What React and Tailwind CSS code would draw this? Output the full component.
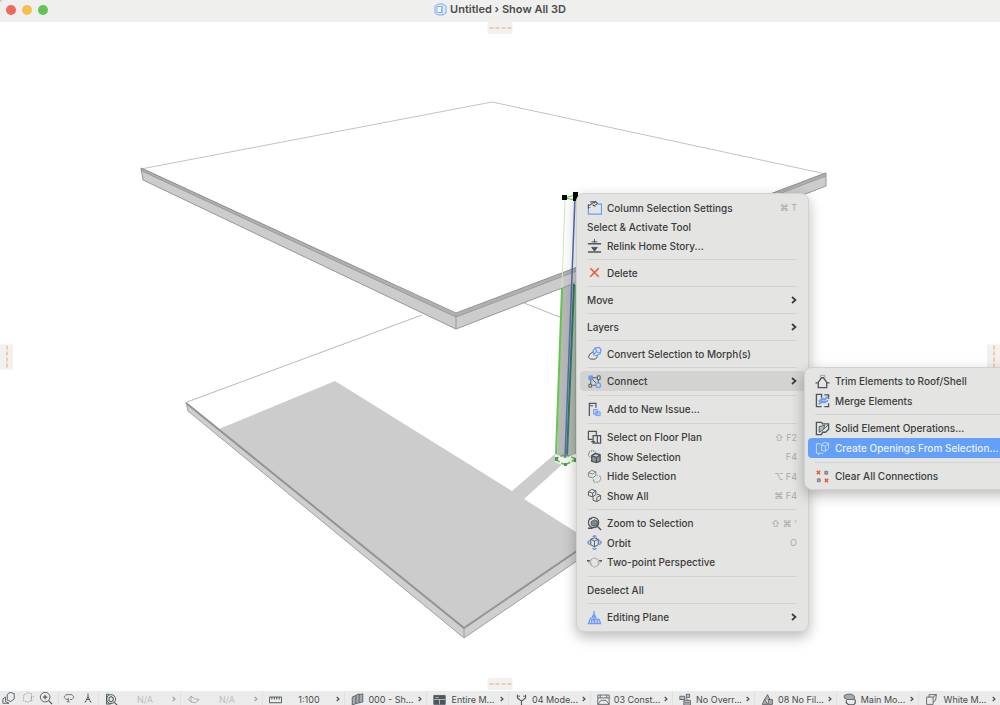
import clsx from "clsx";

const DARK = "#4d565c";
const BLUE = "#6f9bf5";
const RED = "#ee5b3c";

// every icon is drawn on a 16 x 16 grid
const icons = {
    settings: (
        <>
            <path d="M4 8H1.500V15h14V4.500H11" stroke={BLUE} strokeWidth="1.300" />
            <path d="M1.500 9V4.500M2 6l4-2.500M3.500 2h3l2 1.500M6 2.500l3-1 2 2-2 2M6 5l3 2" stroke={DARK} strokeWidth="1.200" />
        </>
    ),
    relink: (
        <>
            <path d="M1 6h14M1 15h14" stroke={DARK} strokeWidth="1.600" />
            <path d="M8 1v4M5 4h6M5 10h6L8 14z" fill={DARK} stroke={DARK} />
        </>
    ),
    remove: <path d="M3.500 3.500l9 9M12.500 3.500l-9 9" stroke={RED} strokeWidth="1.700" />,
    morph: (
        <>
            <path d="M7 6L3 8.500 1.500 12 4 14h5l2.500-3" stroke={DARK} />
            <path d="M6.500 5L9 2l4-.5L15 4l-1 4-4 2.500L7 9zM9 2l1 4 4 2M10 6l-3 3" stroke={BLUE} strokeWidth="1.300" />
        </>
    ),
    connect: (
        <>
            <path d="M2 2h4v4H2z" fill={BLUE} stroke={BLUE} />
            <path d="M6 4h5M4 6v5M12 6v4M6 12h4M6 6l4 4" stroke={DARK} />
            <path d="M11 2h3v4h-3zM2 11h3v3H2z" stroke={DARK} />
            <circle cx="12" cy="12" r="2.500" stroke={BLUE} strokeWidth="1.300" />
        </>
    ),
    issue: (
        <>
            <path d="M2.500 15V1.500h7V6M2.500 4h4" stroke={DARK} strokeWidth="1.300" />
            <path d="M7 8h4v5H7zM9.500 10.500H14v4H9.500z" fill="#b9cef9" stroke={BLUE} />
        </>
    ),
    floorPlan: (
        <>
            <path d="M6 10H1.500V1.500H10V5" stroke={DARK} strokeWidth="1.300" />
            <path d="M6.500 6H11v8H6.500zM11 6h3.500v8H11M4.500 12.500h4" stroke={DARK} strokeWidth="1.300" />
        </>
    ),
    show: (
        <>
            <path d="M1.500 6l1-3L6 1.500 9 3M1.500 7L4 9" stroke={DARK} strokeDasharray="1.500 1" />
            <path d="M5 7l4-2.500L14 6v7l-4 1.500L5 13zM5 7l5 2 4-3M10 9v5" fill="#8b9398" stroke={DARK} strokeWidth="1.400" />
        </>
    ),
    hide: (
        <>
            <path d="M1.500 4L5 1.500 9.500 3v4L6 9.500 1.500 8zM1.500 4L6 5.500 9.500 3" stroke="#7b8387" />
            <path d="M7 11v3h5l2.500-2V8L11 7" stroke="#7b8387" strokeDasharray="2 1" />
        </>
    ),
    showAll: (
        <>
            <path d="M1.500 4L5 1.500 9.500 3v4L6 9.500 1.500 8zM1.500 4L6 5.500 9.500 3M6 5.500v4" stroke={DARK} />
            <path d="M6.500 10v3l4 1.500 4-2.500V8l-4-1.500M10.500 14V10l4-2" stroke={DARK} />
        </>
    ),
    zoomSelection: (
        <>
            <circle cx="7" cy="7" r="5.500" stroke={DARK} strokeWidth="1.300" />
            <path d="M11 11l4 4M2 3h3M1 13h5" stroke={DARK} strokeWidth="1.500" />
            <path d="M4.500 6L8 4l3 1.500V10L7.500 11 4.500 9.500z" fill="#7f888d" stroke={DARK} />
        </>
    ),
    orbit: (
        <>
            <path d="M4 4.500L8 3l4 1.500v6L8 12.500 4 10.500zM4 4.500L8 6.500l4-2M8 6.500v6" stroke={DARK} />
            <path d="M3 5.500L.8 8 3 10.500M13 5.500L15.200 8 13 10.500M6 14l2 1.500L10 14M6 2l2-1.300L10 2" stroke={BLUE} strokeWidth="1.700" />
        </>
    ),
    perspective: (
        <>
            <path d="M0 6h3M13 6h3" stroke={DARK} strokeWidth="1.600" />
            <path d="M4 5l4-2 4 2v6l-4 2-4-2zM1 7l3 3M15 7l-3 3" stroke="#8b9296" strokeDasharray="2 .7" />
        </>
    ),
    plane: (
        <>
            <path d="M4 8L1.500 14.500h13L13 10H5M5 10v4M8 9v5M11 10v4" fill="#b9cef9" stroke={BLUE} strokeWidth="1.300" />
            <path d="M7.500 1v11M5 9l2.500-5L10 9" stroke={BLUE} strokeWidth="1.400" />
        </>
    ),
    trim: (
        <>
            <path d="M.5 9.500H3L7 4h2l4 5.500h2.500" stroke={DARK} strokeWidth="1.400" />
            <path d="M3.500 9.500v5h9v-5" stroke={DARK} strokeWidth="1.400" />
            <path d="M5.500 4V1.500h5V4" stroke="#9aa1a4" />
        </>
    ),
    merge: (
        <>
            <path d="M7 14.500H1.500v-13H7V5M10 2h4.500v4M14.500 11v3.500H10" stroke={DARK} strokeWidth="1.400" />
            <path d="M4 9l4-3 2 1 4-3M4 12l4-3 2 1 4-2" stroke={BLUE} strokeWidth="2" />
        </>
    ),
    solid: (
        <>
            <path d="M7 14.500H1.500v-13H7l1 1.500h6.500V9L11 12H8z" stroke={DARK} strokeWidth="1.400" />
            <path d="M4.500 6l6-1.500L9 9l-4.500 3zM9 9l5-5" fill="#b8bdbf" stroke={DARK} />
        </>
    ),
    opening: (
        <>
            <path d="M6 3H1.500v10H9M4 13v2" stroke="#cfe0ff" />
            <path d="M7 4l3-2.500 4.500 1V8L11 11 7 10zM7 4l4 1.500 3.500-3M11 5.500V11" stroke="#cfe0ff" />
        </>
    ),
    clear: (
        <>
            <path d="M2 2l3.500 3.500M5.500 2L2 5.500M10.500 10.500L14 14M14 10.500L10.500 14" stroke={RED} strokeWidth="1.600" />
            <path d="M10.500 2.500h3v3h-3zM2.500 10.500h3v3h-3z" fill="#a4a9ab" stroke="#737b80" />
        </>
    ),
    back: (
        <>
            <path d="M6 4l3-2.500 5 1.500v6l-4 3-4-1.500z" stroke={DARK} />
            <path d="M1 9l3-2v5l4 2H1z" stroke={DARK} />
        </>
    ),
    forward: <path d="M3 5l4-3 5 1v7l-4 3-5-2zM11 8l4-2M11 12l3-2" stroke={DARK} strokeDasharray="2 1" />,
    zoomIn: (
        <>
            <circle cx="7" cy="7" r="5.500" stroke={DARK} />
            <path d="M11 11l4 4M7 4.500v5M4.500 7h5" stroke={DARK} strokeWidth="1.400" />
        </>
    ),
    turn: <path d="M7 10H4L1.500 7 4 3.500h8L14.500 7 12 10H9M7 7.500V13M9 13H5" stroke={DARK} />,
    walk: <path d="M8 2v4M8 6l-2 4-2 4M8 6l2 4 2 4M5.500 10h5" stroke={DARK} strokeWidth="1.300" />,
    fit: (
        <>
            <circle cx="7.500" cy="7.500" r="5.500" stroke={DARK} strokeWidth="1.200" />
            <path d="M2 1.500h3M2 1.500v12h5M11.500 11.500l3.500 3.500M5 6l2.500-1.500L10 6v3.500L7.500 11 5 9.500z" stroke={DARK} strokeWidth="1.300" />
        </>
    ),
    angle: <path d="M1.500 8L5 4l4 3 6 1-5 4-5-1zM5 4v7" stroke={DARK} />,
    scale: <path d="M.5 5h15v7H.5zM3.500 5v3M6.500 5v3M9.500 5v3M12.500 5v3" stroke={DARK} strokeWidth="1.200" />,
    layers: <path d="M1.500 5L6 3v10l-4.500 2zM6 3l4-2v11l-4 1M10 2l4.500-1v10L10 12" fill="#a4aaad" stroke={DARK} />,
    structure: (
        <>
            <path d="M1 3h14v11H1z" fill={DARK} stroke={DARK} />
            <path d="M1 8h14M8 8v6M3 5.500h4" stroke="#c5c8ca" />
        </>
    ),
    pen: <path d="M3 2v4l5 4 5-4V2M8 10v5M5 3v2M11 3v2" stroke={DARK} strokeWidth="1.400" />,
    model: <path d="M1 2.500h14v11.500H1zM1 6h14M1 14l4-5h6l4 5M4 2.500V6M12 2.500V6" stroke={DARK} />,
    override: <path d="M1 4h6v4H1zM9 1.500h4v4H9zM6 9h8v6H6zM8 6l3 3M7 12h6" fill="#bcc0c2" stroke={DARK} />,
    renovation: <path d="M4 9l4-7 3 6M1.500 14l3-6 4 6zM9 8h5v6H9z" fill="#aab0b2" stroke={DARK} />,
    dimension: (
        <>
            <path d="M1.500 3L5 1.500h6L14 4v4H5L1.500 6z" fill="#a4aaad" stroke={DARK} />
            <path d="M4 9v3l3 2.500h6l2-2V8" stroke={DARK} strokeWidth="1.400" />
        </>
    ),
    style: <path d="M2 5h8v9H2zM5 5V2h9l-1 7-3 2M10 5l4-3" stroke={DARK} />,
};

const mainMenu = [
    { label: "Column Selection Settings", icon: "settings", keys: "⌘ T" },
    { label: "Select & Activate Tool" },
    { label: "Relink Home Story...", icon: "relink" },
    null,
    { label: "Delete", icon: "remove" },
    null,
    { label: "Move", sub: true },
    null,
    { label: "Layers", sub: true },
    null,
    { label: "Convert Selection to Morph(s)", icon: "morph" },
    null,
    { label: "Connect", icon: "connect", sub: true, open: true, tall: true },
    null,
    { label: "Add to New Issue...", icon: "issue", tall: true },
    null,
    { label: "Select on Floor Plan", icon: "floorPlan", keys: "⇧ F2", tall: true },
    { label: "Show Selection", icon: "show", keys: "F4" },
    { label: "Hide Selection", icon: "hide", keys: "⌥ F4", tall: true },
    { label: "Show All", icon: "showAll", keys: "⌘ F4" },
    null,
    { label: "Zoom to Selection", icon: "zoomSelection", keys: "⇧ ⌘ '", tall: true },
    { label: "Orbit", icon: "orbit", keys: "O" },
    { label: "Two-point Perspective", icon: "perspective", tall: true },
    null,
    { label: "Deselect All" },
    null,
    { label: "Editing Plane", icon: "plane", sub: true, tall: true },
];

const connectMenu = [
    { label: "Trim Elements to Roof/Shell", icon: "trim", tall: true },
    { label: "Merge Elements", icon: "merge" },
    null,
    { label: "Solid Element Operations...", icon: "solid", tall: true },
    { label: "Create Openings From Selection...", icon: "opening", active: true, tall: true },
    null,
    { label: "Clear All Connections", icon: "clear", tall: true },
];

const statusCells = [
    { label: "N/A", icon: "fit", off: true },
    { label: "N/A", icon: "angle", off: true, dimIcon: true },
    { label: "1:100", icon: "scale" },
    { label: "000 - Sh...", icon: "layers" },
    { label: "Entire M...", icon: "structure" },
    { label: "04 Mode...", icon: "pen" },
    { label: "03 Const...", icon: "model" },
    { label: "No Overr...", icon: "override" },
    { label: "08 No Fil...", icon: "renovation" },
    { label: "Main Mo...", icon: "dimension" },
    { label: "White M...", icon: "style" },
];

function Icon({ name, className }) {
    return (
        <svg viewBox="0 0 16 16" fill="none" className={clsx("shrink-0", className)} aria-hidden="true">
            {icons[name]}
        </svg>
    );
}

function Chevron({ className }) {
    return (
        <svg viewBox="0 0 6 8" fill="none" stroke="currentColor" strokeWidth="1.700" className={clsx("shrink-0", className)} aria-hidden="true">
            <path d="M1 1l3.500 3L1 7" />
        </svg>
    );
}

function Menu({ items, label, className }) {
    return (
        <div
            role="menu"
            aria-label={label}
            className={clsx(
                "absolute flex flex-col rounded-lg border border-[#d2d2d0] bg-[#e4e4e2] px-[3px] text-[10px] font-medium shadow-[0_5px_14px_rgba(0,0,0,0.28)]",
                className
            )}
        >
            {items.map((item, i) =>
                item === null ? (
                    <div key={i} role="separator" className="flex h-2 items-center pl-[7px] pr-2">
                        <div className="h-px w-full bg-[#d3d3d1]" />
                    </div>
                ) : (
                    <button
                        key={i}
                        type="button"
                        role="menuitem"
                        className={clsx(
                            "flex items-center gap-[5px] whitespace-nowrap rounded pl-[7px] pr-2 text-left",
                            item.tall ? "h-5" : "h-[19px]",
                            item.open && "bg-[#d3d3d1]",
                            item.active ? "bg-[#649ffa] text-[#eaf1ff]" : "text-[#3c3c3c]"
                        )}
                    >
                        {item.icon && <Icon name={item.icon} className="size-[15px]" />}
                        <span className="flex-1">{item.label}</span>
                        {item.keys && <span className="text-[9px] font-normal text-[#a9a9a7]">{item.keys}</span>}
                        {item.sub && <Chevron className="h-2 w-1.5" />}
                    </button>
                )
            )}
        </div>
    );
}

function Handle({ vertical, className }) {
    return (
        <div
            className={clsx(
                "absolute flex items-center justify-center gap-0.5 bg-[#f1f1f1]",
                vertical ? "h-[25px] w-[13px] flex-col" : "h-3 w-[25px]",
                className
            )}
        >
            {[0, 1, 2, 3].map((n) => (
                <span key={n} className={clsx("bg-[#f3cba9]", vertical ? "h-1 w-0.5" : "h-0.5 w-1")} />
            ))}
        </div>
    );
}

function Model() {
    return (
        <svg viewBox="0 22 1000 669" preserveAspectRatio="xMinYMin slice" className="h-full w-full" fill="none" role="img" aria-label="3D model">
            {/* lower slab */}
            <path d="M187 402L422 315M524 303l38 15" stroke="#b8b8b8" />
            <path d="M335 381L219 429 464 628 590 543V541L524 499l42-38-10-8-44 38z" fill="#cccccc" />
            <path d="M186 402L464 628 590 542v10L464 638 188 411z" fill="#cfcfcf" />
            <path d="M186 403L464 628 590 542" stroke="#949494" strokeWidth="2" />
            <path d="M186 402l2 9L464 638 590 552M464 628v10" stroke="#a0a0a0" />

            {/* column */}
            <path d="M562 285h16v173h-21z" fill="#b7b7b7" />
            <path d="M555 454l10 4 11-4v8l-11 4-10-4z" fill="#f2f7f0" />

            {/* upper slab */}
            <path d="M141 169L492 102 826 174" stroke="#c2c2c2" />
            <path d="M141 168L456 314 826 173v13L456 329 143 180z" fill="#cccccc" />
            <path d="M141 169L456 315 826 174" stroke="#b0b0b0" strokeWidth="3" />
            <path d="M141 168L456 313 826 173" stroke="#909090" />
            <path d="M142 171L456 317 826 176" stroke="#999" />
            <path d="M141 168l2 12L456 329 826 186V173M456 315v14" stroke="#969696" />

            {/* selected edges */}
            <path d="M565 198l-3 90" stroke="#c5efbd" />
            <path d="M562 288l-6 166" stroke="#61c64a" strokeWidth="2" />
            <path d="M574 284l-7 172" stroke="#2c7d60" strokeWidth="2" />
            <path d="M575 197L565 458" stroke="#506fb5" strokeWidth="1.500" />
            <path d="M576 284v170" stroke="#65b953" />
            <path d="M565 198l10-3v5z" stroke="#61c64a" />
            <path d="M555 459l10-5 11 5-11 6z" stroke="#5fb74d" strokeDasharray="4 2" strokeWidth="1.500" />
            <path d="M555 457h3v4h-3zM564 463h3v3h-3zM574 458h3v4h-3z" fill="#4f9a4c" />
            <path d="M562 195h5v5h-5zM573 192h5v9h-5z" fill="#050505" />
        </svg>
    );
}

export default function App() {
    return (
        <div className="flex h-screen flex-col overflow-hidden bg-[#c4c4c4] font-['Inter','Liberation_Sans','DejaVu_Sans',sans-serif] text-[11px] leading-none">
            <header className="relative flex h-[22px] shrink-0 items-center justify-center rounded-tl bg-[#efefed] pb-1">
                <div className="absolute left-1.5 top-[5px] flex gap-1.5">
                    <button type="button" aria-label="Close" className="size-2.5 rounded-full bg-[#ec6a5e]" />
                    <button type="button" aria-label="Minimize" className="size-2.5 rounded-full bg-[#f5bf4f]" />
                    <button type="button" aria-label="Zoom" className="size-2.5 rounded-full bg-[#61c554]" />
                </div>
                <h1 className="flex items-center gap-[3px] font-semibold text-[#4c4c4c]">
                    <svg viewBox="0 0 13 13" className="size-[13px]" fill="none" stroke="#7fadf8" aria-hidden="true">
                        <path d="M1 3l3-2h5l3 2v7l-3 2H4l-3-2z" fill="#dce9fd" />
                        <path d="M3 3.500h4.500v6H3z" fill="#fff" />
                        <path d="M8.500 2v9" stroke="#a9c8fa" />
                    </svg>
                    Untitled › Show All 3D
                </h1>
            </header>

            <main className="relative min-h-0 flex-1 overflow-hidden bg-white">
                <Model />

                <Handle className="left-1/2 top-0 -translate-x-1/2" />
                <Handle className="bottom-px left-1/2 -translate-x-1/2" />
                <Handle vertical className="left-0 top-1/2 -translate-y-1/2" />
                <Handle vertical className="right-0 top-1/2 -translate-y-1/2" />

                <Menu items={mainMenu} label="Column" className="left-[576px] top-[171px] w-[233px] py-1" />
                <Menu items={connectMenu} label="Connect" className="left-[804px] top-[345px] w-[212px] py-[3px]" />
            </main>

            <footer className="flex h-3.5 shrink-0 items-center bg-[#ebebeb] text-[9px] text-[#4a4a4a]">
                <div className="flex w-[58px] shrink-0 items-center justify-between pl-0.5 pr-[5px]">
                    <button type="button" aria-label="Previous view"><Icon name="back" className="size-3.5" /></button>
                    <button type="button" aria-label="Next view"><Icon name="forward" className="size-3.5 opacity-50" /></button>
                    <button type="button" aria-label="Zoom in"><Icon name="zoomIn" className="size-3.5" /></button>
                </div>
                <div className="flex w-10 shrink-0 items-center justify-between border-l border-[#e0e0e0] px-1">
                    <button type="button" aria-label="Orbit"><Icon name="turn" className="size-3" /></button>
                    <button type="button" aria-label="Explore"><Icon name="walk" className="size-3" /></button>
                </div>
                {statusCells.map((cell, i) => (
                    <button
                        key={i}
                        type="button"
                        className="flex h-full min-w-0 flex-1 items-center border-l border-[#e0e0e0] pl-[6px] pr-1 pt-0.5"
                    >
                        <Icon name={cell.icon} className={clsx("size-[13px]", cell.dimIcon && "opacity-50")} />
                        <span className={clsx("flex-1 whitespace-nowrap text-center", cell.off && "text-[#bdbdbd]")}>
                            {cell.label}
                        </span>
                        <Chevron className={clsx("h-1.5 w-1", cell.off && "text-[#a0a0a0]")} />
                    </button>
                ))}
            </footer>
        </div>
    );
}
